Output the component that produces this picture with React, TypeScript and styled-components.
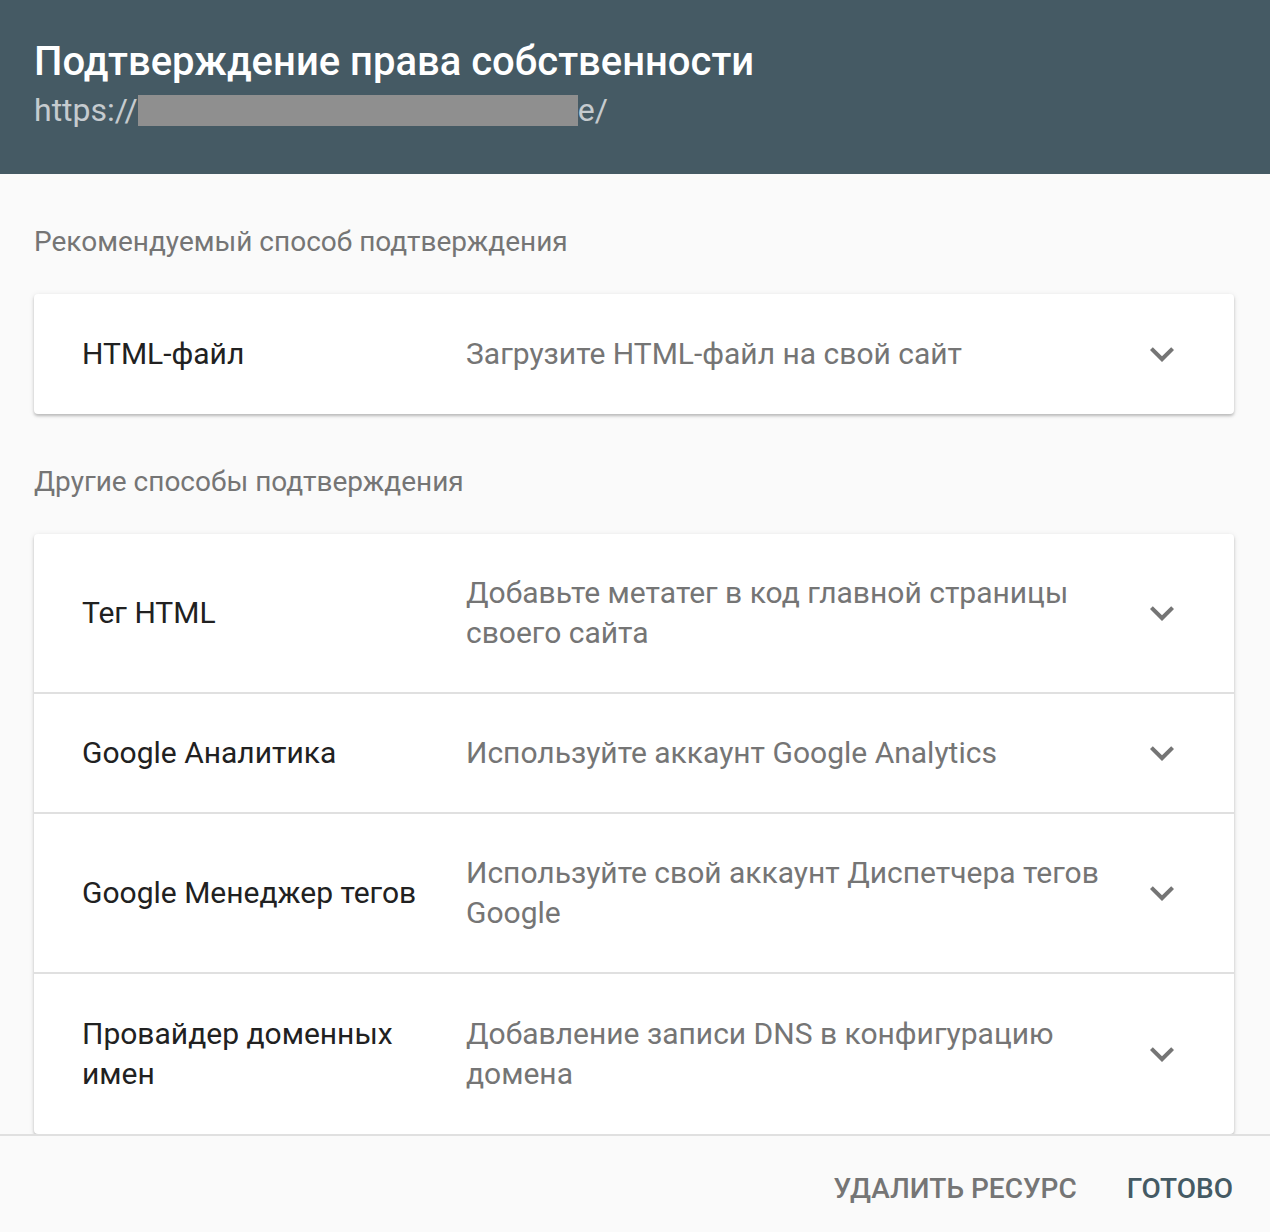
import styled, { createGlobalStyle } from "styled-components";

const GlobalStyle = createGlobalStyle`
  html, body {
    margin: 0;
    padding: 0;
    background: #fafafa;
    font-family: Roboto, "Noto Sans", "Liberation Sans", sans-serif;
  }
  * {
    box-sizing: border-box;
  }
`;

const Page = styled.div`
  display: flex;
  flex-direction: column;
  width: 100%;
  height: 100vh;
  overflow: hidden;
  background: #fafafa;
`;

const Header = styled.header`
  flex: 0 0 174px;
  background: #455a64;
  padding: 38px 34px 0;
`;

const Title = styled.h1`
  margin: 0;
  font-size: 40px;
  line-height: 48px;
  font-weight: 500;
  color: #ffffff;
`;

const Url = styled.div`
  display: flex;
  align-items: center;
  margin-top: 4px;
  font-size: 32px;
  line-height: 40px;
  color: #c5cbcf;
`;

const Redacted = styled.span`
  display: inline-block;
  width: 440px;
  height: 31px;
  background: #8f8f8f;
`;

const Scroll = styled.main`
  flex: 1 1 auto;
  overflow: hidden;
  padding: 48px 36px 0 34px;
`;

const SectionLabel = styled.div<{ $first?: boolean }>`
  margin: ${(p) => (p.$first ? "0" : "48px")} 0 32px;
  font-size: 28px;
  line-height: 40px;
  color: #757575;
`;

const Card = styled.div`
  background: #ffffff;
  border-radius: 4px;
  box-shadow: 0 2px 3px rgba(0, 0, 0, 0.22), 0 1px 6px rgba(0, 0, 0, 0.08);
`;

const Row = styled.div`
  display: flex;
  align-items: center;
  padding: 39px 48px;
  border-bottom: 2px solid #e0e0e0;
  &:last-child {
    border-bottom: none;
    padding: 40px 48px;
  }
`;

const Method = styled.div`
  flex: 0 0 384px;
  padding-right: 24px;
  font-size: 30px;
  line-height: 40px;
  color: #212121;
`;

const Description = styled.div`
  flex: 1 1 auto;
  padding-right: 12px;
  font-size: 30px;
  line-height: 40px;
  color: #757575;
`;

const Chevron = styled.svg`
  flex: 0 0 48px;
  width: 48px;
  height: 48px;
  margin: -4px 0;
  fill: #757575;
`;

const Footer = styled.footer`
  flex: 0 0 98px;
  display: flex;
  align-items: center;
  justify-content: flex-end;
  gap: 18px;
  padding: 8px 21px 0 0;
  border-top: 2px solid #e0e0e0;
  background: #fafafa;
`;

const Button = styled.button<{ $primary?: boolean }>`
  border: none;
  background: transparent;
  padding: 0 16px;
  height: 72px;
  font-family: inherit;
  font-size: 28px;
  font-weight: 500;
  text-transform: uppercase;
  color: ${(p) => (p.$primary ? "#455a64" : "#757575")};
  cursor: pointer;
`;

const ExpandMore = () => (
  <Chevron viewBox="0 0 24 24">
    <path d="M16.59 8.59L12 13.17 7.41 8.59 6 10l6 6 6-6z" />
  </Chevron>
);

const others = [
  { name: "Тег HTML", text: "Добавьте метатег в код главной страницы своего сайта" },
  { name: "Google Аналитика", text: "Используйте аккаунт Google Analytics" },
  { name: "Google Менеджер тегов", text: "Используйте свой аккаунт Диспетчера тегов Google" },
  { name: "Провайдер доменных имен", text: "Добавление записи DNS в конфигурацию домена" },
];

export default function App() {
  return (
    <Page>
      <GlobalStyle />
      <Header>
        <Title>Подтверждение права собственности</Title>
        <Url>
          https://
          <Redacted />
          e/
        </Url>
      </Header>
      <Scroll>
        <SectionLabel $first>Рекомендуемый способ подтверждения</SectionLabel>
        <Card>
          <Row>
            <Method>HTML-файл</Method>
            <Description>Загрузите HTML-файл на свой сайт</Description>
            <ExpandMore />
          </Row>
        </Card>
        <SectionLabel>Другие способы подтверждения</SectionLabel>
        <Card>
          {others.map((m) => (
            <Row key={m.name}>
              <Method>{m.name}</Method>
              <Description>{m.text}</Description>
              <ExpandMore />
            </Row>
          ))}
        </Card>
      </Scroll>
      <Footer>
        <Button>Удалить ресурс</Button>
        <Button $primary>Готово</Button>
      </Footer>
    </Page>
  );
}
